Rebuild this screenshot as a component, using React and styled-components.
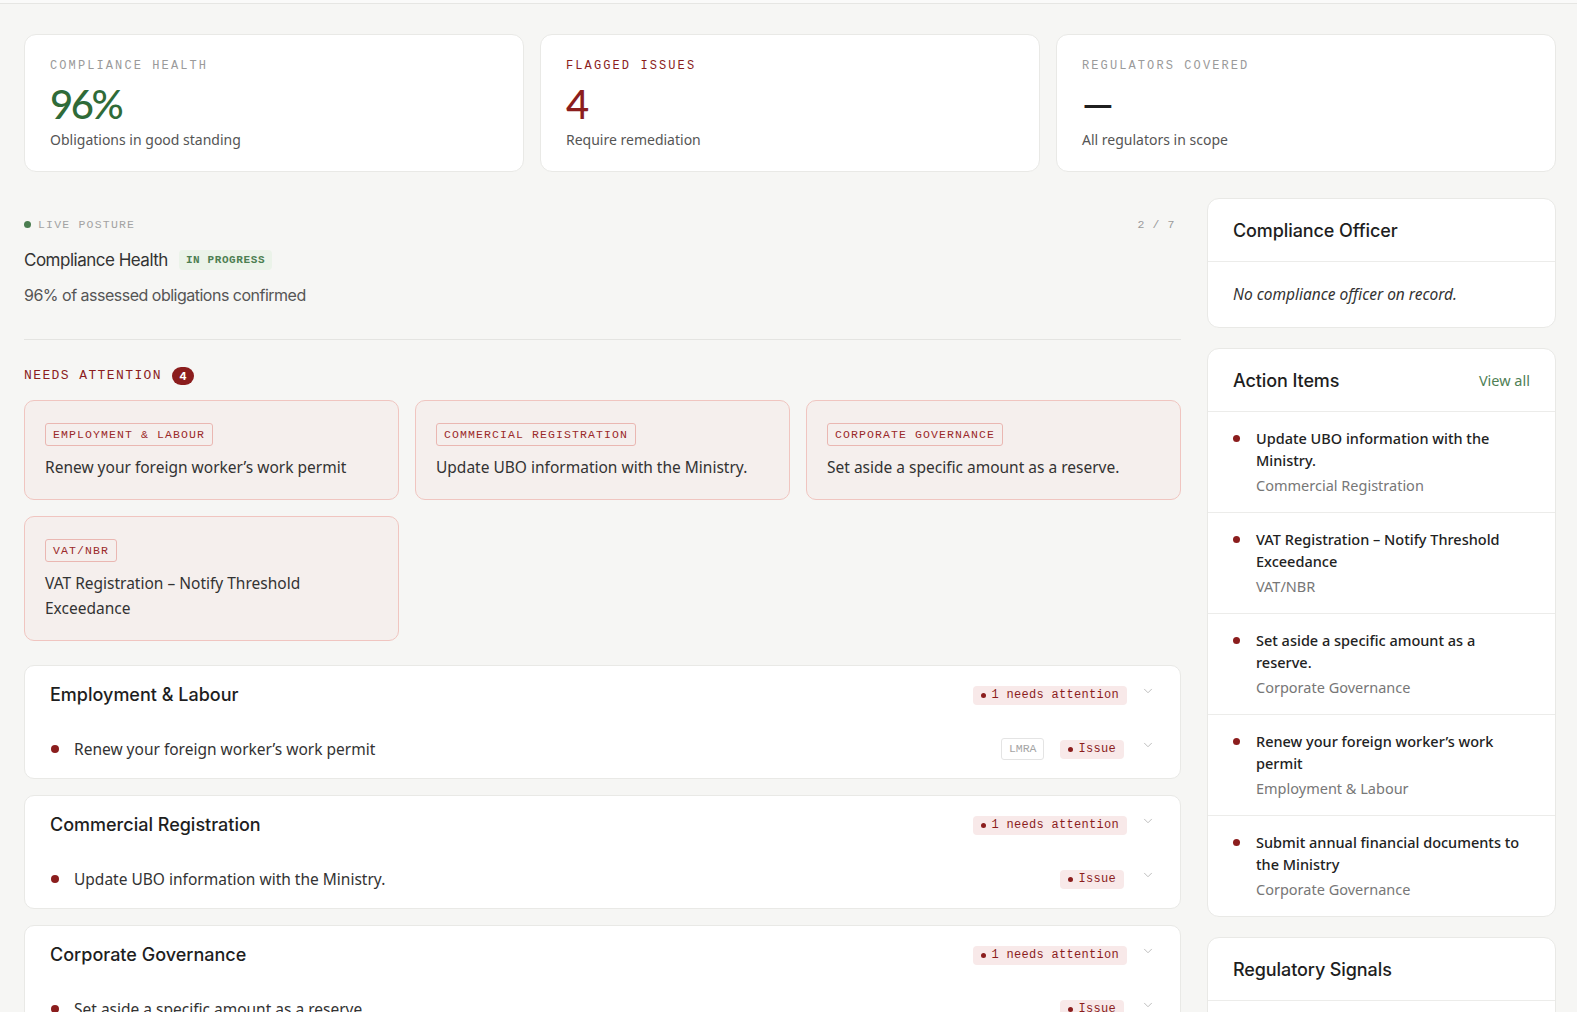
import React from 'react';
import styled, { createGlobalStyle } from 'styled-components';
import { ChevronDown } from 'lucide-react';

const RED = '#8b1d1d';
const GREEN = '#2f6b38';

const stats = [
	{ label: 'Compliance Health', value: '96%', note: 'Obligations in good standing', tone: 'green' },
	{ label: 'Flagged Issues', value: '4', note: 'Require remediation', tone: 'red' },
	{ label: 'Regulators Covered', value: '—', note: 'All regulators in scope', tone: 'plain' },
];

const attention = [
	{ tag: 'Employment & Labour', text: 'Renew your foreign worker’s work permit' },
	{ tag: 'Commercial Registration', text: 'Update UBO information with the Ministry.' },
	{ tag: 'Corporate Governance', text: 'Set aside a specific amount as a reserve.' },
	{ tag: 'VAT/NBR', text: 'VAT Registration – Notify Threshold Exceedance' },
];

const categories = [
	{ title: 'Employment & Labour', items: [{ text: 'Renew your foreign worker’s work permit', reg: 'LMRA' }] },
	{ title: 'Commercial Registration', items: [{ text: 'Update UBO information with the Ministry.' }] },
	{ title: 'Corporate Governance', items: [{ text: 'Set aside a specific amount as a reserve.' }] },
];

const actions = [
	{ title: 'Update UBO information with the Ministry.', cat: 'Commercial Registration' },
	{ title: 'VAT Registration – Notify Threshold Exceedance', cat: 'VAT/NBR' },
	{ title: 'Set aside a specific amount as a reserve.', cat: 'Corporate Governance' },
	{ title: 'Renew your foreign worker’s work permit', cat: 'Employment & Labour' },
	{ title: 'Submit annual financial documents to the Ministry', cat: 'Corporate Governance' },
];

const App = () => {
	return (
		<>
			<GlobalStyle />
			<TopStrip />
			<Page>
				<StatGrid>
					{stats.map((s) => (
						<StatCard key={s.label}>
							<StatLabel $tone={s.tone}>{s.label}</StatLabel>
							<StatValue $tone={s.tone}>{s.value}</StatValue>
							<StatNote>{s.note}</StatNote>
						</StatCard>
					))}
				</StatGrid>

				<Main>
					<LeftCol>
						<PostureRow>
							<Eyebrow>
								<LiveDot />
								Live posture
							</Eyebrow>
							<Counter>2 / 7</Counter>
						</PostureRow>
						<PostureTitle>
							Compliance Health
							<ProgressBadge>IN PROGRESS</ProgressBadge>
						</PostureTitle>
						<PostureSub>96% of assessed obligations confirmed</PostureSub>

						<Divider />

						<AttentionHead>
							Needs attention
							<CountBadge>4</CountBadge>
						</AttentionHead>
						<AttentionGrid>
							{attention.map((a) => (
								<AttentionCard key={a.tag}>
									<Tag>{a.tag}</Tag>
									<AttentionText>{a.text}</AttentionText>
								</AttentionCard>
							))}
						</AttentionGrid>

						<CategoryList>
							{categories.map((c) => (
								<CategoryCard key={c.title}>
									<CategoryHead>
										<CategoryTitle>{c.title}</CategoryTitle>
										<RightGroup>
											<StatusPill>
												<PillDot />1 needs attention
											</StatusPill>
											<Chevron size={14} strokeWidth={1.5} />
										</RightGroup>
									</CategoryHead>
									{c.items.map((it) => (
										<ItemRow key={it.text}>
											<ItemLeft>
												<BulletDot />
												{it.text}
											</ItemLeft>
											<RightGroup>
												{it.reg && <RegTag>{it.reg}</RegTag>}
												<StatusPill $small>
													<PillDot />Issue
												</StatusPill>
												<Chevron size={14} strokeWidth={1.5} />
											</RightGroup>
										</ItemRow>
									))}
								</CategoryCard>
							))}
						</CategoryList>
					</LeftCol>

					<RightCol>
						<Panel>
							<PanelHead>
								<PanelTitle>Compliance Officer</PanelTitle>
							</PanelHead>
							<PanelEmpty>No compliance officer on record.</PanelEmpty>
						</Panel>

						<Panel>
							<PanelHead>
								<PanelTitle>Action Items</PanelTitle>
								<ViewAll>View all</ViewAll>
							</PanelHead>
							{actions.map((a) => (
								<ActionItem key={a.title}>
									<ActionDot />
									<div>
										<ActionTitle>{a.title}</ActionTitle>
										<ActionCat>{a.cat}</ActionCat>
									</div>
								</ActionItem>
							))}
						</Panel>

						<Panel>
							<PanelHead>
								<PanelTitle>Regulatory Signals</PanelTitle>
							</PanelHead>
							<PanelEmpty>No new signals.</PanelEmpty>
						</Panel>
					</RightCol>
				</Main>
			</Page>
		</>
	);
};

const GlobalStyle = createGlobalStyle`
	body {
		margin: 0;
		background: #f6f6f4;
		font-family: 'Noto Sans', 'Open Sans', sans-serif;
		color: #2a2a2a;
	}
	* { box-sizing: border-box; }
`;

const TopStrip = styled.div`
	height: 4px;
	background: #fafaf9;
	border-bottom: 1px solid #e6e6e3;
`;

const Page = styled.div`
	padding: 30px 21px 40px 24px;
`;

const StatGrid = styled.div`
	display: grid;
	grid-template-columns: repeat(3, 1fr);
	gap: 16px;
`;

const StatCard = styled.div`
	background: #fff;
	border: 1px solid #e9e9e6;
	border-radius: 12px;
	padding: 22px 25px 20px;
	height: 138px;
`;

const toneColor = (t) => (t === 'green' ? GREEN : t === 'red' ? RED : '#1f1f1f');

const StatLabel = styled.div`
	font-family: 'Liberation Mono', monospace;
	font-size: 12px;
	letter-spacing: 2.1px;
	text-transform: uppercase;
	color: ${(p) => (p.$tone === 'red' ? RED : '#9a9a9a')};
	line-height: 18px;
`;

const StatValue = styled.div`
	font-family: Lato, sans-serif;
	font-size: 40px;
	font-weight: 500;
	line-height: 46px;
	margin-top: 6px;
	color: ${(p) => toneColor(p.$tone)};
	letter-spacing: -2.5px;
`;

const StatNote = styled.div`
	font-size: 14px;
	color: #555;
	line-height: 22px;
	margin-top: 2px;
`;

const Main = styled.div`
	display: grid;
	grid-template-columns: 1fr 349px;
	gap: 26px;
	margin-top: 26px;
	align-items: start;
`;

const LeftCol = styled.div`
	padding-top: 18px;
`;

const PostureRow = styled.div`
	display: flex;
	justify-content: space-between;
	align-items: center;
	height: 16px;
`;

const Eyebrow = styled.div`
	display: flex;
	align-items: center;
	gap: 7px;
	font-family: 'Liberation Mono', monospace;
	font-size: 11.5px;
	letter-spacing: 1.2px;
	text-transform: uppercase;
	color: #a3a3a3;
`;

const LiveDot = styled.span`
	width: 7px;
	height: 7px;
	border-radius: 50%;
	background: #4b7d50;
`;

const Counter = styled.span`
	font-family: 'Liberation Mono', monospace;
	font-size: 11.5px;
	color: #9a9a9a;
	letter-spacing: 0.6px;
	margin-right: 6px;
`;

const PostureTitle = styled.div`
	display: flex;
	align-items: center;
	gap: 11px;
	margin-top: 17px;
	font-family: Inter, sans-serif;
	font-size: 17px;
	letter-spacing: -0.5px;
	color: #333;
	line-height: 22px;
`;

const ProgressBadge = styled.span`
	font-family: 'Liberation Mono', monospace;
	font-size: 11px;
	font-weight: 700;
	letter-spacing: 0.6px;
	color: #4d7f52;
	background: #ebf3e9;
	padding: 2px 7px;
	border-radius: 4px;
	line-height: 16px;
`;

const PostureSub = styled.div`
	margin-top: 13px;
	font-family: Inter, sans-serif;
	font-size: 16px;
	letter-spacing: -0.5px;
	color: #555;
	line-height: 22px;
`;

const Divider = styled.hr`
	border: 0;
	border-top: 1px solid #e4e4e1;
	margin: 33px 0 0;
`;

const AttentionHead = styled.div`
	display: flex;
	align-items: center;
	gap: 10px;
	margin-top: 27px;
	font-family: 'Liberation Mono', monospace;
	font-size: 13px;
	letter-spacing: 1.4px;
	text-transform: uppercase;
	color: ${RED};
	line-height: 18px;
`;

const CountBadge = styled.span`
	display: inline-flex;
	align-items: center;
	justify-content: center;
	min-width: 22px;
	height: 18px;
	border-radius: 9px;
	background: ${RED};
	color: #fff;
	font-family: Inter, sans-serif;
	font-size: 11px;
	font-weight: 700;
	letter-spacing: 0;
`;

const AttentionGrid = styled.div`
	display: grid;
	grid-template-columns: repeat(3, 1fr);
	gap: 16px;
	margin-top: 15px;
`;

const AttentionCard = styled.div`
	background: #f5efed;
	border: 1px solid #f0c5c0;
	border-radius: 10px;
	padding: 20px 20px 19px;
`;

const Tag = styled.span`
	display: inline-block;
	font-family: 'Liberation Mono', monospace;
	font-size: 11.5px;
	letter-spacing: 1.1px;
	text-transform: uppercase;
	color: #9b2a2a;
	border: 1px solid #eab7b2;
	border-radius: 3px;
	padding: 3px 7px;
	line-height: 15px;
`;

const AttentionText = styled.div`
	margin-top: 9px;
	font-size: 15.5px;
	line-height: 25px;
	color: #333;
`;

const CategoryList = styled.div`
	display: flex;
	flex-direction: column;
	gap: 16px;
	margin-top: 24px;
`;

const CategoryCard = styled.div`
	background: #fff;
	border: 1px solid #e9e9e6;
	border-radius: 10px;
	padding-bottom: 7px;
`;

const CategoryHead = styled.div`
	display: flex;
	justify-content: space-between;
	align-items: center;
	padding: 17px 25px 20px;
`;

const CategoryTitle = styled.div`
	font-family: Inter, sans-serif;
	font-size: 18px;
	font-weight: 500;
	letter-spacing: 0;
	color: #1e1e1e;
	line-height: 24px;
`;

const RightGroup = styled.div`
	display: flex;
	align-items: center;
	gap: 14px;
`;

const StatusPill = styled.span`
	display: inline-flex;
	align-items: center;
	gap: 5px;
	font-family: 'Liberation Mono', monospace;
	font-size: 12px;
	letter-spacing: 0.3px;
	color: ${RED};
	background: #f8e9e9;
	border-radius: 4px;
	padding: 2px 8px;
	line-height: 15px;
	margin-right: ${(p) => (p.$small ? '3px' : '0')};
`;

const PillDot = styled.span`
	width: 5px;
	height: 5px;
	border-radius: 50%;
	background: ${RED};
`;

const Chevron = styled(ChevronDown)`
	color: #b5b5b5;
	margin-top: -8px;
`;

const ItemRow = styled.div`
	display: flex;
	justify-content: space-between;
	align-items: center;
	padding: 10px 25px;
`;

const ItemLeft = styled.div`
	display: flex;
	align-items: center;
	gap: 15px;
	font-size: 15.5px;
	color: #333;
	line-height: 24px;
	padding-left: 1px;
`;

const BulletDot = styled.span`
	width: 8px;
	height: 8px;
	border-radius: 50%;
	background: ${RED};
`;

const RegTag = styled.span`
	font-family: 'Liberation Mono', monospace;
	font-size: 11.5px;
	color: #a5a5a5;
	border: 1px solid #e4e4e4;
	border-radius: 3px;
	padding: 3px 7px;
	line-height: 14px;
	margin-right: 2px;
`;

const RightCol = styled.div`
	display: flex;
	flex-direction: column;
	gap: 20px;
`;

const Panel = styled.div`
	background: #fff;
	border: 1px solid #e9e9e6;
	border-radius: 12px;
	overflow: hidden;
`;

const PanelHead = styled.div`
	display: flex;
	justify-content: space-between;
	align-items: center;
	height: 63px;
	padding: 0 25px;
	border-bottom: 1px solid #ececea;
`;

const PanelTitle = styled.div`
	font-family: Inter, sans-serif;
	font-size: 18px;
	font-weight: 500;
	letter-spacing: -0.1px;
	color: #1e1e1e;
`;

const ViewAll = styled.a`
	font-size: 14.5px;
	color: #4f8056;
	cursor: pointer;
`;

const PanelEmpty = styled.div`
	padding: 20px 25px 21px;
	font-size: 15.5px;
	font-style: italic;
	color: #333;
	line-height: 24px;
`;

const ActionItem = styled.div`
	display: flex;
	align-items: flex-start;
	gap: 16px;
	padding: 15px 30px 16px 25px;
	border-bottom: 1px solid #ececea;

	&:last-child {
		border-bottom: 0;
	}
`;

const ActionDot = styled.span`
	flex: none;
	width: 7px;
	height: 7px;
	border-radius: 50%;
	background: ${RED};
	margin-top: 8px;
`;

const ActionTitle = styled.div`
	font-size: 14.5px;
	font-weight: 500;
	color: #222;
	line-height: 22px;
`;

const ActionCat = styled.div`
	font-size: 14.5px;
	color: #777;
	line-height: 22px;
	margin-top: 3px;
`;

export default App;
